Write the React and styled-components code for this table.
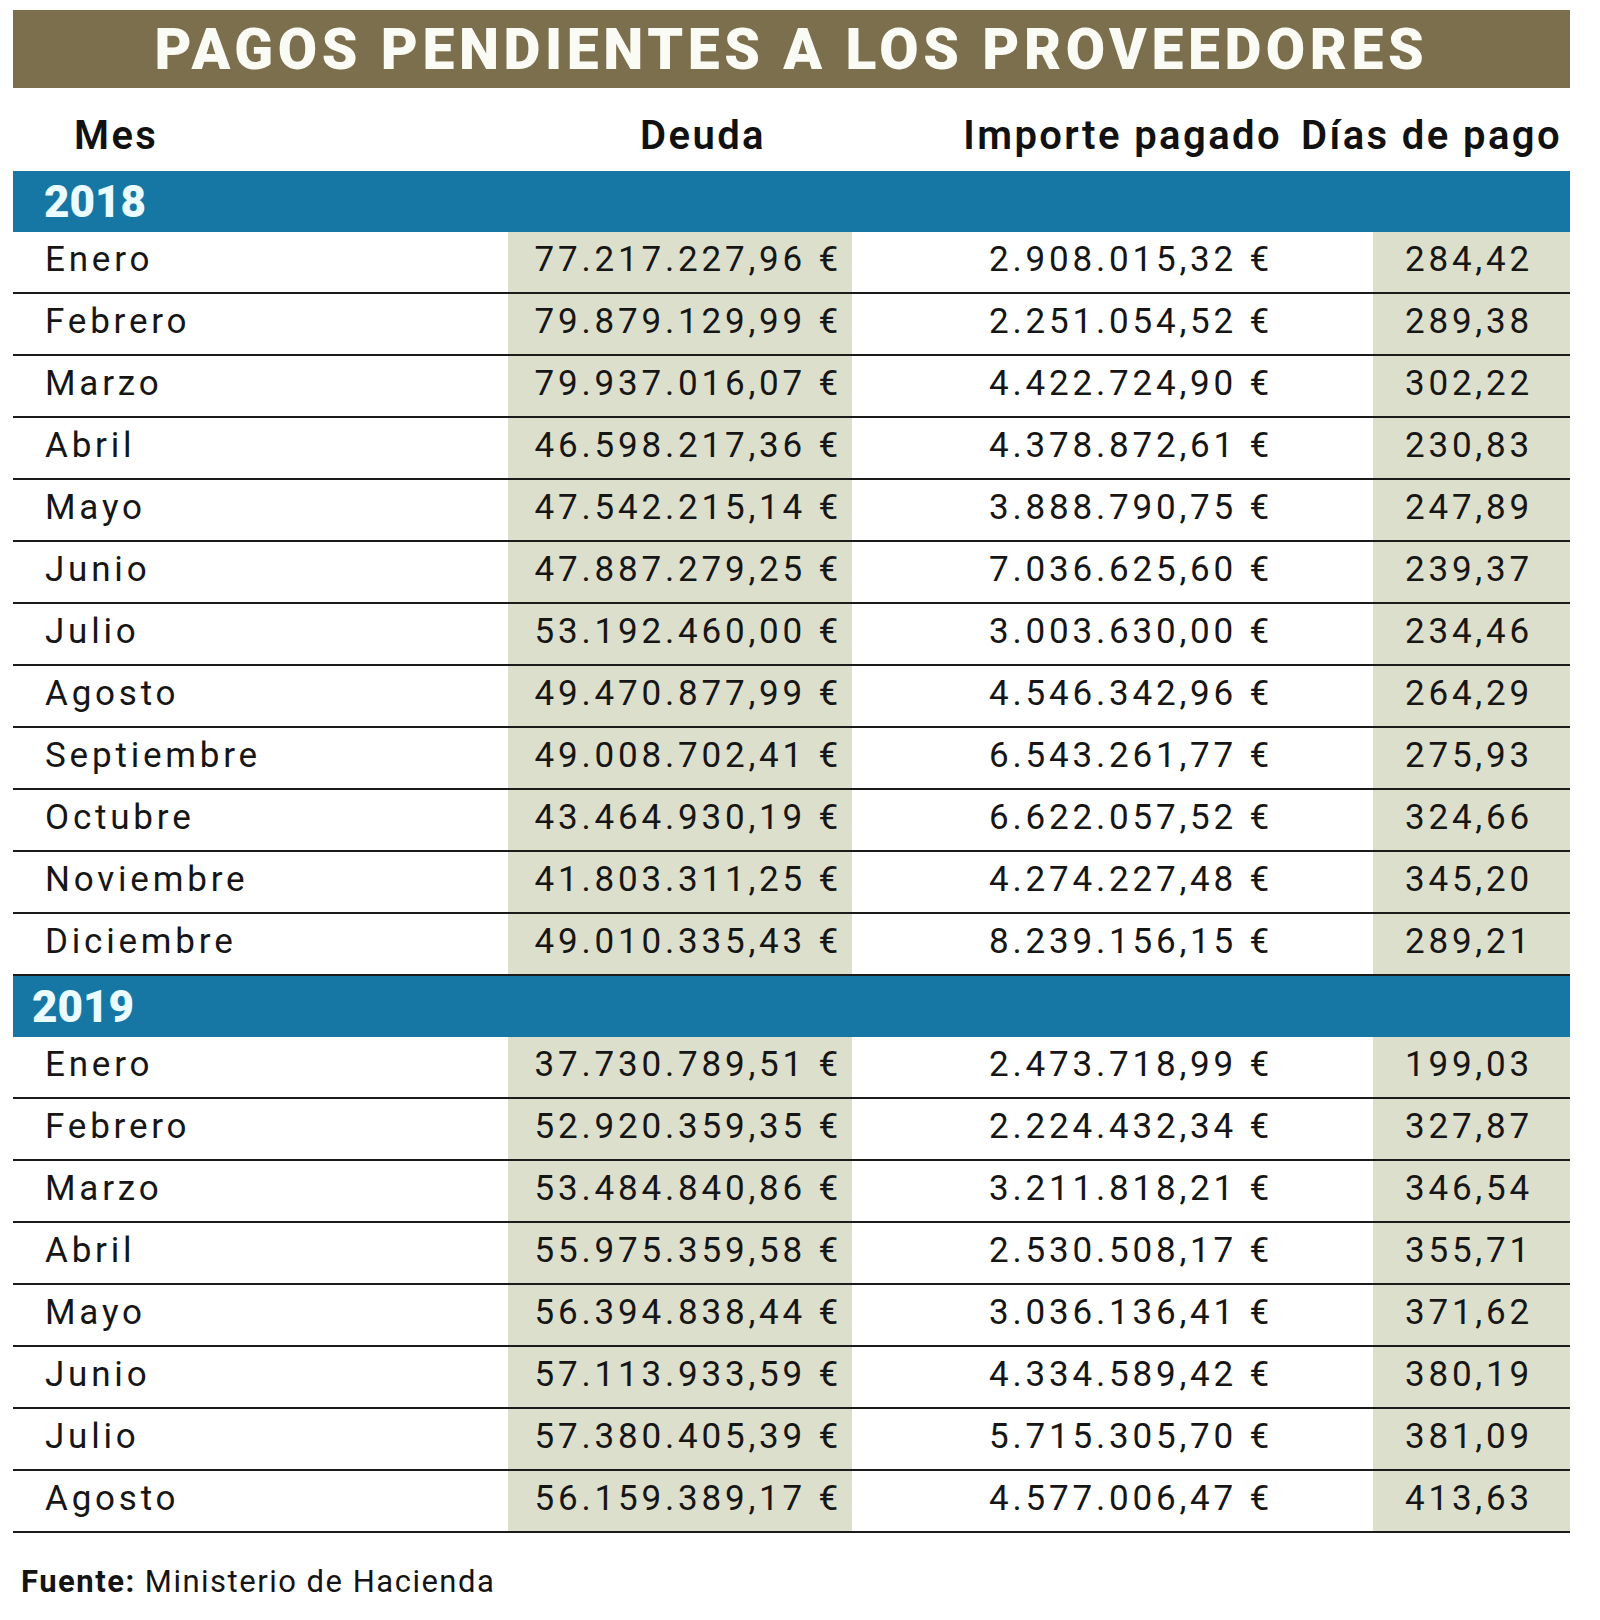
import React from "react";
import styled, { createGlobalStyle } from "styled-components";

const GlobalStyle = createGlobalStyle`
  html, body { margin: 0; padding: 0; background: #ffffff; }
  body { font-family: Roboto, "Liberation Sans", sans-serif; color: #141414; }
`;

const Page = styled.div`
  width: 1557px;
  padding: 10px 0 0 13px;
`;

const TitleBar = styled.div`
  height: 78px;
  background: #7c6f4d;
  display: flex;
  align-items: center;
  justify-content: center;
  color: #fbfbf5;
  font-family: Roboto, sans-serif;
  font-weight: 900;
  font-size: 57px;
  letter-spacing: 4.6px;
  text-transform: uppercase;
`;

const HeaderRow = styled.div`
  height: 83px;
  box-sizing: border-box;
  padding-top: 12px;
  display: grid;
  grid-template-columns: 495px 344px 442px 1fr;
  align-items: center;
  font-weight: 600;
  font-size: 40px;
  letter-spacing: 2.4px;
  color: #111;
`;

const HeadCell = styled.div`
  text-align: ${(p) => p.$align || "left"};
  padding-left: ${(p) => p.$pl || 0}px;
  padding-right: ${(p) => p.$pr || 0}px;
  white-space: nowrap;
`;

const YearBar = styled.div`
  height: 61px;
  box-sizing: border-box;
  background: #1677a5;
  display: flex;
  align-items: center;
  padding-left: ${(p) => p.$indent}px;
  color: #eafcff;
  font-weight: 900;
  font-size: 44px;
`;

const Row = styled.div`
  height: 62px;
  box-sizing: border-box;
  display: grid;
  grid-template-columns: 495px 344px 521px 1fr;
  border-bottom: 2px solid #1b1b1b;
  font-size: 35px;
  letter-spacing: 3.8px;
  color: #161616;
`;

const Cell = styled.div`
  display: flex;
  align-items: center;
  justify-content: ${(p) => (p.$right ? "flex-end" : "flex-start")};
  padding-left: ${(p) => p.$pl || 0}px;
  padding-right: ${(p) => p.$pr || 0}px;
  padding-bottom: 5px;
  background: ${(p) => (p.$shade ? "#dcdfcb" : "transparent")};
  white-space: nowrap;
`;

const Footer = styled.div`
  padding-top: 33px;
  padding-left: 8px;
  font-size: 31px;
  letter-spacing: 1.5px;
  line-height: 1;
  color: #141414;
`;

const Strong = styled.span`
  font-weight: 700;
`;

const data2018 = [
  ["Enero", "77.217.227,96 €", "2.908.015,32 €", "284,42"],
  ["Febrero", "79.879.129,99 €", "2.251.054,52 €", "289,38"],
  ["Marzo", "79.937.016,07 €", "4.422.724,90 €", "302,22"],
  ["Abril", "46.598.217,36 €", "4.378.872,61 €", "230,83"],
  ["Mayo", "47.542.215,14 €", "3.888.790,75 €", "247,89"],
  ["Junio", "47.887.279,25 €", "7.036.625,60 €", "239,37"],
  ["Julio", "53.192.460,00 €", "3.003.630,00 €", "234,46"],
  ["Agosto", "49.470.877,99 €", "4.546.342,96 €", "264,29"],
  ["Septiembre", "49.008.702,41 €", "6.543.261,77 €", "275,93"],
  ["Octubre", "43.464.930,19 €", "6.622.057,52 €", "324,66"],
  ["Noviembre", "41.803.311,25 €", "4.274.227,48 €", "345,20"],
  ["Diciembre", "49.010.335,43 €", "8.239.156,15 €", "289,21"],
];

const data2019 = [
  ["Enero", "37.730.789,51 €", "2.473.718,99 €", "199,03"],
  ["Febrero", "52.920.359,35 €", "2.224.432,34 €", "327,87"],
  ["Marzo", "53.484.840,86 €", "3.211.818,21 €", "346,54"],
  ["Abril", "55.975.359,58 €", "2.530.508,17 €", "355,71"],
  ["Mayo", "56.394.838,44 €", "3.036.136,41 €", "371,62"],
  ["Junio", "57.113.933,59 €", "4.334.589,42 €", "380,19"],
  ["Julio", "57.380.405,39 €", "5.715.305,70 €", "381,09"],
  ["Agosto", "56.159.389,17 €", "4.577.006,47 €", "413,63"],
];

function DataRow({ row }) {
  const [mes, deuda, importe, dias] = row;
  return (
    <Row>
      <Cell $pl={32}>{mes}</Cell>
      <Cell $shade $right $pr={10}>{deuda}</Cell>
      <Cell $right $pr={100}>{importe}</Cell>
      <Cell $shade $right $pr={37}>{dias}</Cell>
    </Row>
  );
}

export default function App() {
  return (
    <>
      <GlobalStyle />
      <Page>
        <TitleBar>Pagos pendientes a los proveedores</TitleBar>
        <HeaderRow>
          <HeadCell $pl={61}>Mes</HeadCell>
          <HeadCell $align="right" $pr={86}>Deuda</HeadCell>
          <HeadCell $align="right" $pr={12}>Importe pagado</HeadCell>
          <HeadCell $align="right" $pr={8}>Días de pago</HeadCell>
        </HeaderRow>
        <YearBar $indent={31}>2018</YearBar>
        {data2018.map((r) => (
          <DataRow key={"a" + r[0]} row={r} />
        ))}
        <YearBar $indent={19}>2019</YearBar>
        {data2019.map((r) => (
          <DataRow key={"b" + r[0]} row={r} />
        ))}
        <Footer>
          <Strong>Fuente:</Strong> Ministerio de Hacienda
        </Footer>
      </Page>
    </>
  );
}
